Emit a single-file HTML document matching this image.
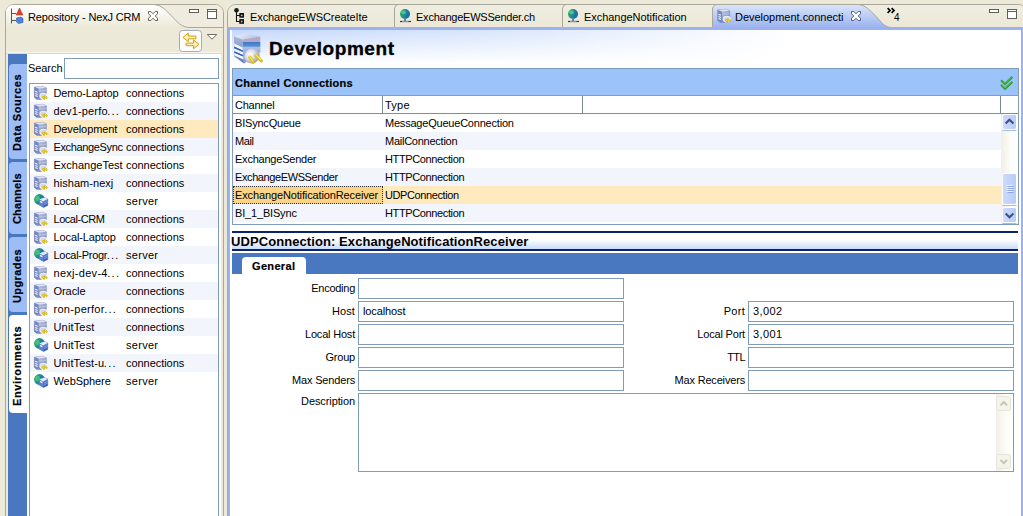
<!DOCTYPE html>
<html><head><meta charset="utf-8"><title>Development.connections</title>
<style>
*{box-sizing:border-box;margin:0;padding:0}
html,body{width:1023px;height:516px;overflow:hidden}
body{position:relative;background:#ece9d8;font-family:"Liberation Sans","DejaVu Sans",sans-serif;font-size:11px;color:#000;letter-spacing:-0.22px;line-height:13px}
.abs{position:absolute}
span,div,svg{position:absolute;white-space:pre}
b{font-weight:bold}
/* left panel */
.lp{left:5px;top:4px;width:219px;height:520px;border:1px solid #aca899;border-radius:9px 9px 0 0;background:#ece9d8}
.lhead{left:6px;top:5px;width:217px;height:23px;border-radius:8px 8px 0 0;background:#efecdf}
.lwhite{left:8px;top:54px;width:213px;height:470px;background:#fff}
.ltopline{left:6px;top:52px;width:216px;height:2px;background:linear-gradient(#f6f4ea 50%,#dcd9c9 50%)}
.vbar{left:8px;top:54px;width:19px;height:470px;background:#4a78c0}
.vtab{left:1px;width:18px;background:#9dbdf6;border-radius:4px 0 0 4px}
.vtab.on{background:#fff}
.vtxt{font-weight:bold;letter-spacing:0.4px;transform-origin:0 0;transform:rotate(-90deg);line-height:13px;height:13px}
.search{left:28px;top:62px}
.sinput{left:64px;top:58px;width:155px;height:21px;border:1px solid #7f9db9;background:#fff}
.list{left:29px;top:83px;width:190px;height:440px;border:1px solid #7f9db9;background:#fff;overflow:hidden}
.row{left:0px;width:188px;height:18px}
.row.alt,.trow.alt{background:#f3f5fc}
.row.sel,.trow.sel{background:#ffe9bf}
.ic{left:4px;top:2px;overflow:visible}
.c1{left:23.5px;top:3px;letter-spacing:-0.3px}
.c2{left:96px;top:3px}
/* right panel */
.rp{left:227px;top:4px;width:800px;height:520px;border:1px solid #aca899;border-radius:9px 9px 0 0;background:#ece9d8}
.rhead{left:228px;top:5px;width:798px;height:22px;border-radius:8px 8px 0 0;background:linear-gradient(#f0eee3,#edeadb 50%,#ece9d8)}
.rblue{left:227px;top:27px;width:796px;height:500px;background:#9ab2ef}
.rwhite{left:230px;top:30px;width:791px;height:490px;background:#fff}
.rgrad{left:232px;top:30px;width:560px;height:38px;background:linear-gradient(to bottom,rgba(255,255,255,0) 0%,rgba(255,255,255,1) 88%),linear-gradient(to right,#c4d8fb 0%,#dbe7fc 50%,#ffffff 100%)}
.tabtxt{top:11px}
.title{left:269px;top:38px;font-size:19px;font-weight:bold;letter-spacing:0.6px;line-height:22px}
.sec{left:232px;top:68px;width:787px;height:157px;border:1px solid #7f9db9;background:#fff}
.sechead{left:233px;top:69px;width:785px;height:26px;background:#9cc4fb}
.sectitle{left:235px;top:77px;font-weight:bold;letter-spacing:0.15px}
.colhead{left:233px;top:95px;width:785px;height:19px;background:#fff;border-bottom:1px solid #828e9e;border-top:1px solid #7f9cc8}
.colsep{top:96px;width:1px;height:18px;background:#7d8897}
.tbody{left:233px;top:114px;width:768px;height:110px;overflow:hidden;background:#fff}
.trow{left:0;width:768px;height:18px}
.t1{left:2px;top:3px;letter-spacing:-0.17px}
.t2{left:152px;top:3px;letter-spacing:-0.25px}
.focbox{left:0;top:0;width:150px;height:18px;border:1px dotted #333;background:#fcd487}
.navy{left:232px;width:786px;height:2px;background:#0a246a}
.h2bar{left:232px;top:233px;width:786px;height:16px;background:linear-gradient(#ffffff,#ffffff 40%,#c9dcfb)}
.h2{left:231px;top:234px;font-size:13px;font-weight:bold;letter-spacing:0.05px;line-height:15px}
.tabbar{left:232px;top:253px;width:786px;height:21px;background:#4a78c0}
.gtab{left:242px;top:257px;width:64px;height:17px;background:#fff;border-radius:4px 4px 0 0}
.gtxt{left:252px;top:260px;font-weight:bold;letter-spacing:0.28px}
.fld{height:21px;border:1px solid #7f9db9;background:#fff}
.lbl{text-align:right;width:120px}
.ftxt{left:4px;top:3px}

.dots{font-style:normal;letter-spacing:1.25px;margin-left:-0.5px;position:static}
.redge{left:227px;top:28px;width:1px;height:500px;background:#a9a8c0}
.sectitle,.gtxt,.vtxt{-webkit-text-stroke:0.2px #000}

</style></head>
<body>
<svg width="0" height="0" style="left:0;top:0">
<defs>
<linearGradient id="gsrv" x1="0" y1="0" x2="0.6" y2="1"><stop offset="0" stop-color="#cfd6ea"/><stop offset="0.5" stop-color="#9dabd2"/><stop offset="1" stop-color="#7686bd"/></linearGradient>
<radialGradient id="gglobe" cx="0.3" cy="0.45" r="0.75"><stop offset="0" stop-color="#58d27a"/><stop offset="0.45" stop-color="#2b9a78"/><stop offset="1" stop-color="#1c63b0"/></radialGradient>
<linearGradient id="gglobe2" x1="0" y1="0.35" x2="1" y2="0.65"><stop offset="0" stop-color="#2fae55"/><stop offset="0.45" stop-color="#1f8f96"/><stop offset="1" stop-color="#1a5fb4"/></linearGradient>
<linearGradient id="gbox" x1="0" y1="0" x2="0.4" y2="1"><stop offset="0" stop-color="#cfdcf6"/><stop offset="0.35" stop-color="#5f8adb"/><stop offset="1" stop-color="#2f55b0"/></linearGradient>
<g id="ic-c">
 <path d="M0.4 1 L8.4 0.3 L12.3 1.7 L12.3 9.2 L7 13.6 L2.6 13.2 L0.4 11.4 Z" fill="url(#gsrv)" stroke="#6272ac" stroke-width="0.5"/>
 <path d="M0.4 1 L8.4 0.3 L12.3 1.7 L4.6 2.6 Z" fill="#dfe4f2"/>
 <path d="M0.4 1 L4.6 2.6 L4.6 13.3 L2.6 13.2 L0.4 11.4 Z" fill="#7787c2"/>
 <path d="M5 4.2 L12 3.4 L12 5.2 L5 6 Z" fill="#bcc4de" opacity="0.8"/>
 <path d="M1.2 5.2 L3.6 6.2 M1.2 7.4 L3.6 8.4 M1.2 9.6 L3.6 10.6" stroke="#f2f4fc" stroke-width="1.1"/>
 <ellipse cx="9.4" cy="10" rx="4" ry="3.3" fill="#f6f6fa" opacity="0.95"/>
 <ellipse cx="9.2" cy="9.8" rx="2.8" ry="2" fill="#d8d9e6"/>
 <path d="M8.6 11 L10 12.6 M10.8 10.2 L12.6 11.8" stroke="#cdb416" stroke-width="2.1" stroke-linecap="round"/>
 <path d="M8.5 10.7 L9.6 12 M10.8 9.9 L12.2 11.2" stroke="#f8ef7c" stroke-width="0.8" stroke-linecap="round"/>
</g>
<g id="ic-s">
 <circle cx="5.5" cy="5.5" r="5.4" fill="url(#gglobe2)"/>
 <ellipse cx="3.6" cy="4.4" rx="2.3" ry="2.6" fill="#5fdc84" opacity="0.55"/>
 <path d="M5.2 5.6 L10.4 3.4 L13.8 5 L13.8 11.4 L9.6 13.6 L5.2 11 Z" fill="url(#gbox)" stroke="#3c5aa6" stroke-width="0.4"/>
 <path d="M5.2 5.6 L10.4 3.4 L13.8 5 L9 7.4 Z" fill="#e4eaf9"/>
 <path d="M5.2 5.6 L9 7.4 L9.6 13.6 L5.2 11 Z" fill="#5b82d4"/>
 <path d="M6 7.4 L8.4 8.6" stroke="#f4f7fe" stroke-width="1.2"/>
 <path d="M9.8 9.2 L13.4 7.4 M9.8 11 L13.4 9.2" stroke="#9fb4e6" stroke-width="0.7"/>
</g>
<g id="ic-globe">
 <circle cx="5" cy="5" r="5" fill="url(#gglobe2)"/>
 <ellipse cx="3.6" cy="3.4" rx="2.2" ry="1.8" fill="#7fe6a0" opacity="0.55"/>
 <path d="M5 10 V12" stroke="#1d3f7a" stroke-width="1.2"/>
 <path d="M0 12.5 H11" stroke="#3a2a5a" stroke-width="1.2"/>
 <path d="M2 12.5 H8.5" stroke="#7c95d8" stroke-width="1.2"/>
</g>
</defs>
</svg>
<div class="lp"></div>
<div class="lhead"></div>
<svg width="230" height="60" style="left:0;top:0" viewBox="0 0 230 60">
 <defs><linearGradient id="gltab" x1="0" y1="0" x2="0" y2="1"><stop offset="0" stop-color="#ffffff"/><stop offset="0.45" stop-color="#f6f5ee"/><stop offset="1" stop-color="#ece9d8"/></linearGradient></defs>
 <!-- active tab fill -->
 <path d="M6 28 L6 13 Q6 5 14 5 L153.5 5 C162 5 166 10.5 171.7 16.1 C177 21.5 181 28 190 28 Z" fill="url(#gltab)"/>
 <path d="M153.5 4.5 C162 5 166 10.5 171.7 16.1 C177 21.5 181 27.5 190 27.5 L223 27.5" fill="none" stroke="#aca899" stroke-width="1"/>
 <!-- repo icon -->
 <path d="M11.5 8.5 V23.5 M11.5 13.5 H16 M11.5 20.5 H16" stroke="#555" stroke-width="1" fill="none"/>
 <path d="M19.5 8 L22.8 15 L16.2 15 Z" fill="#e0452c" stroke="#b02a18" stroke-width="0.6"/>
 <path d="M16.5 18 L21 17 L23 18.5 L23 22.5 L18.5 23.5 L16.5 22 Z" fill="#4f83d8" stroke="#2c5cb0" stroke-width="0.6"/>
 <!-- close X -->
 <path d="M148.50 11.50 L150.75 11.50 L153.00 13.75 L155.25 11.50 L157.50 11.50 L157.50 13.75 L155.25 16.00 L157.50 18.25 L157.50 20.50 L155.25 20.50 L153.00 18.25 L150.75 20.50 L148.50 20.50 L148.50 18.25 L150.75 16.00 L148.50 13.75 Z" fill="#fdfdfb" stroke="#55544c" stroke-width="0.9"/>
 <!-- min / max -->
 <rect x="189.5" y="9.5" width="9" height="3" fill="#fff" stroke="#5f5e54"/>
 <rect x="207.5" y="9.5" width="9" height="9" fill="#fff" stroke="#5f5e54"/>
 <path d="M207.5 11.5 H216.5" stroke="#5f5e54"/>
 <!-- toolbar button -->
 <rect x="179.5" y="30.5" width="22" height="21" rx="3" fill="#fdfdfd" stroke="#a3abb8"/>
 <path d="M183 37.4 L188.3 33 L188.3 36 L195.9 36 L195.9 38.8 L188.3 38.8 L188.3 41.7 Z" fill="#fff0b4" stroke="#cf9d12" stroke-width="1"/>
 <path d="M198.9 44.4 L193.6 40 L193.6 43.1 L186 43.1 L186 45.7 L193.6 45.7 L193.6 48.7 Z" fill="#fff0b4" stroke="#cf9d12" stroke-width="1"/>
 <!-- dropdown -->
 <path d="M207.2 34.5 L216.8 34.5 L212 39.2 Z" fill="#fff" stroke="#6e6d62"/>
</svg>
<span class="tabtxt" style="left:28px;letter-spacing:-0.15px">Repository - NexJ CRM</span>
<div class="ltopline"></div>
<div class="lwhite"></div>
<div class="vbar">
 <div class="vtab" style="top:10px;height:95px"></div>
 <div class="vtab" style="top:108px;height:72px"></div>
 <div class="vtab" style="top:183px;height:75px"></div>
 <div class="vtab on" style="top:261px;height:98px"></div>
 <span class="vtxt" style="left:3px;top:97px;letter-spacing:0.57px">Data Sources</span>
 <span class="vtxt" style="left:3px;top:170px;letter-spacing:0.15px">Channels</span>
 <span class="vtxt" style="left:3px;top:249px">Upgrades</span>
 <span class="vtxt" style="left:3px;top:352px;letter-spacing:0.57px">Environments</span>
</div>
<span class="search" style="letter-spacing:-0.07px">Search</span>
<div class="sinput"></div>
<div class="list">
<div class="row" style="top:0px"><svg class="ic" width="16" height="16" viewBox="0 0 16 16"><use href="#ic-c"/></svg><span class="c1" style="letter-spacing:-0.16px">Demo-Laptop</span><span class="c2" style="letter-spacing:-0.05px">connections</span></div>
<div class="row alt" style="top:18px"><svg class="ic" width="16" height="16" viewBox="0 0 16 16"><use href="#ic-c"/></svg><span class="c1" style="letter-spacing:0.16px">dev1-perfo<i class="dots">...</i></span><span class="c2" style="letter-spacing:-0.05px">connections</span></div>
<div class="row sel" style="top:36px"><svg class="ic" width="16" height="16" viewBox="0 0 16 16"><use href="#ic-c"/></svg><span class="c1" style="letter-spacing:-0.1px">Development</span><span class="c2" style="letter-spacing:-0.05px">connections</span></div>
<div class="row alt" style="top:54px"><svg class="ic" width="16" height="16" viewBox="0 0 16 16"><use href="#ic-c"/></svg><span class="c1" style="letter-spacing:-0.36px">ExchangeSync</span><span class="c2" style="letter-spacing:-0.05px">connections</span></div>
<div class="row" style="top:72px"><svg class="ic" width="16" height="16" viewBox="0 0 16 16"><use href="#ic-c"/></svg><span class="c1" style="letter-spacing:-0.0px">ExchangeTest</span><span class="c2" style="letter-spacing:-0.05px">connections</span></div>
<div class="row alt" style="top:90px"><svg class="ic" width="16" height="16" viewBox="0 0 16 16"><use href="#ic-c"/></svg><span class="c1" style="letter-spacing:0.05px">hisham-nexj</span><span class="c2" style="letter-spacing:-0.05px">connections</span></div>
<div class="row" style="top:108px"><svg class="ic" width="16" height="16" viewBox="0 0 16 16"><use href="#ic-s"/></svg><span class="c1" style="letter-spacing:-0.3px">Local</span><span class="c2" style="letter-spacing:0.29px">server</span></div>
<div class="row alt" style="top:126px"><svg class="ic" width="16" height="16" viewBox="0 0 16 16"><use href="#ic-c"/></svg><span class="c1" style="letter-spacing:-0.46px">Local-CRM</span><span class="c2" style="letter-spacing:-0.05px">connections</span></div>
<div class="row" style="top:144px"><svg class="ic" width="16" height="16" viewBox="0 0 16 16"><use href="#ic-c"/></svg><span class="c1" style="letter-spacing:-0.11px">Local-Laptop</span><span class="c2" style="letter-spacing:-0.05px">connections</span></div>
<div class="row alt" style="top:162px"><svg class="ic" width="16" height="16" viewBox="0 0 16 16"><use href="#ic-s"/></svg><span class="c1" style="letter-spacing:-0.29px">Local-Progr<i class="dots">...</i></span><span class="c2" style="letter-spacing:0.29px">server</span></div>
<div class="row" style="top:180px"><svg class="ic" width="16" height="16" viewBox="0 0 16 16"><use href="#ic-c"/></svg><span class="c1" style="letter-spacing:0.29px">nexj-dev-4<i class="dots">...</i></span><span class="c2" style="letter-spacing:-0.05px">connections</span></div>
<div class="row alt" style="top:198px"><svg class="ic" width="16" height="16" viewBox="0 0 16 16"><use href="#ic-c"/></svg><span class="c1" style="letter-spacing:-0.06px">Oracle</span><span class="c2" style="letter-spacing:-0.05px">connections</span></div>
<div class="row" style="top:216px"><svg class="ic" width="16" height="16" viewBox="0 0 16 16"><use href="#ic-c"/></svg><span class="c1" style="letter-spacing:0.29px">ron-perfor<i class="dots">...</i></span><span class="c2" style="letter-spacing:-0.05px">connections</span></div>
<div class="row alt" style="top:234px"><svg class="ic" width="16" height="16" viewBox="0 0 16 16"><use href="#ic-c"/></svg><span class="c1" style="letter-spacing:0.16px">UnitTest</span><span class="c2" style="letter-spacing:-0.05px">connections</span></div>
<div class="row" style="top:252px"><svg class="ic" width="16" height="16" viewBox="0 0 16 16"><use href="#ic-s"/></svg><span class="c1" style="letter-spacing:0.16px">UnitTest</span><span class="c2" style="letter-spacing:0.29px">server</span></div>
<div class="row alt" style="top:270px"><svg class="ic" width="16" height="16" viewBox="0 0 16 16"><use href="#ic-c"/></svg><span class="c1" style="letter-spacing:0.13px">UnitTest-u<i class="dots">...</i></span><span class="c2" style="letter-spacing:-0.05px">connections</span></div>
<div class="row" style="top:288px"><svg class="ic" width="16" height="16" viewBox="0 0 16 16"><use href="#ic-s"/></svg><span class="c1" style="letter-spacing:-0.07px">WebSphere</span><span class="c2" style="letter-spacing:0.29px">server</span></div>
</div>
<div class="rp"></div>
<div class="rhead"></div>
<div class="rblue"></div>
<div class="rwhite"></div>
<div class="redge"></div>
<div class="rgrad"></div>
<svg width="1023" height="32" style="left:0;top:0" viewBox="0 0 1023 32">
 <defs><linearGradient id="gtab" x1="0" y1="0" x2="0" y2="1"><stop offset="0" stop-color="#dbe6fb"/><stop offset="1" stop-color="#9ab2ef"/></linearGradient></defs>
 <!-- active tab -->
 <path d="M712.5 28 L712.5 9 Q713 4.5 718 4.5 L857.5 4.5 C866 5 870 10.5 875.7 16.1 C881 21.5 884 27.5 892 27.5 L892 28 Z" fill="url(#gtab)" stroke="#aca899" stroke-width="1"/>
 <rect x="712" y="27" width="190" height="2" fill="#9ab2ef"/>
 <!-- separators -->
 <path d="M394.5 27 L394.5 9 Q394.5 5 398 4.5" fill="none" stroke="#aca899"/>
 <path d="M562.5 27 L562.5 9 Q562.5 5 566 4.5" fill="none" stroke="#aca899"/>
 <!-- tab1 icon -->
 <circle cx="236.5" cy="10.3" r="2.3" fill="#1a1a1a"/>
 <path d="M236.5 11 V21.5 H240 M236.5 15.5 H240" stroke="#111" stroke-width="1.1" fill="none"/>
 <rect x="239.3" y="13" width="4.7" height="4.7" fill="#111"/>
 <rect x="239.3" y="19.1" width="4.7" height="4.7" fill="#111"/>
 <circle cx="241.7" cy="15.4" r="0.95" fill="#a8c8b0"/>
 <circle cx="241.7" cy="21.5" r="0.95" fill="#a8b6d8"/>
 <!-- globe icons -->
 <use href="#ic-globe" x="400" y="9"/>
 <use href="#ic-globe" x="568" y="9"/>
 <use href="#ic-c" x="717.3" y="9"/>
 <!-- close X -->
 <path d="M851.50 11.50 L853.75 11.50 L856.00 13.75 L858.25 11.50 L860.50 11.50 L860.50 13.75 L858.25 16.00 L860.50 18.25 L860.50 20.50 L858.25 20.50 L856.00 18.25 L853.75 20.50 L851.50 20.50 L851.50 18.25 L853.75 16.00 L851.50 13.75 Z" fill="#fbfbf8" stroke="#4f5f86" stroke-width="1"/>
 <!-- chevrons -->
 <path d="M887.6 8.2 L890 10.5 L887.6 12.8 M891.6 8.2 L894 10.5 L891.6 12.8" fill="none" stroke="#000" stroke-width="1.7"/>
 <!-- min / max -->
 <rect x="989.5" y="9.5" width="9" height="3" fill="#fff" stroke="#5f5e54"/>
 <rect x="1007.5" y="9.5" width="9" height="9" fill="#fff" stroke="#5f5e54"/>
 <path d="M1007.5 11.5 H1016.5" stroke="#5f5e54"/>
</svg>
<span class="tabtxt" style="left:250px;letter-spacing:-0.09px">ExchangeEWSCreateIte</span>
<span class="tabtxt" style="left:416px;letter-spacing:-0.23px">ExchangeEWSSender.ch</span>
<span class="tabtxt" style="left:584px;letter-spacing:-0.04px">ExchangeNotification</span>
<span class="tabtxt" style="left:735px;letter-spacing:-0.02px">Development.connecti</span>
<span style="left:894px;top:11px;font-size:10px;letter-spacing:0">4</span>
<!-- big icon -->
<svg width="40" height="38" style="left:230px;top:30px" viewBox="0 0 40 38">
 <defs>
  <linearGradient id="gbtop" x1="0" y1="0" x2="1" y2="0.3"><stop offset="0" stop-color="#eef2fa"/><stop offset="1" stop-color="#b8c4de"/></linearGradient>
  <linearGradient id="gbfront" x1="0" y1="0" x2="0" y2="1"><stop offset="0" stop-color="#b7a6c8"/><stop offset="0.2" stop-color="#b7a6c8"/><stop offset="0.22" stop-color="#3f7cc9"/><stop offset="0.36" stop-color="#5a8fd4"/><stop offset="0.4" stop-color="#a9bfe6"/><stop offset="1" stop-color="#7d93cc"/></linearGradient>
  <linearGradient id="gbleft" x1="0" y1="0" x2="0" y2="1"><stop offset="0" stop-color="#aab9dc"/><stop offset="1" stop-color="#5f78ba"/></linearGradient>
  <radialGradient id="gplug" cx="0.45" cy="0.35" r="0.7"><stop offset="0" stop-color="#ffffff"/><stop offset="0.45" stop-color="#dcdde8"/><stop offset="1" stop-color="#8d90ac"/></radialGradient>
 </defs>
 <path d="M4 6.3 L15 3.8 L30.2 6.5 L12.2 9.6 Z" fill="url(#gbtop)"/>
 <path d="M12.2 9.6 L30.2 6.5 L30.5 22 L14 33.5 Z" fill="url(#gbfront)"/>
 <path d="M4 6.3 L12.2 9.6 L14 33.5 L4.4 26.5 Z" fill="url(#gbleft)"/>
 <path d="M4.2 13.6 L12.6 17.4 L12.8 20.4 L4.2 16.6 Z M4.2 18.2 L12.9 22 L13.1 25 L4.3 21.2 Z M4.3 22.8 L13.2 26.6 L13.4 29.6 L4.4 25.6 Z" fill="#f3f6fd"/>
 <path d="M4.2 16.6 L12.8 20.4 L12.9 22 L4.2 18.2 Z M4.3 21.2 L13.1 25 L13.2 26.6 L4.3 22.8 Z" fill="#2f5fba"/>
 <ellipse cx="22" cy="26" rx="7.8" ry="7.2" fill="url(#gplug)" transform="rotate(-35 22 26)"/>
 <path d="M19.8 27.2 L23.4 32.2" stroke="#d9c018" stroke-width="3.2" stroke-linecap="round"/>
 <path d="M25.8 25.6 L31.3 30.8" stroke="#d9c018" stroke-width="3.2" stroke-linecap="round"/>
 <path d="M19.6 26.6 L22.8 31" stroke="#f7ee72" stroke-width="1.1" stroke-linecap="round"/>
 <path d="M25.8 24.9 L30.8 29.6" stroke="#f7ee72" stroke-width="1.1" stroke-linecap="round"/>
</svg>
<span class="title" style="-webkit-text-stroke:0.35px #000;letter-spacing:0.57px">Development</span>
<div class="sec"></div>
<div class="sechead"></div>
<span class="sectitle" style="letter-spacing:0.25px">Channel Connections</span>
<svg width="16" height="16" style="left:999px;top:75px" viewBox="0 0 16 16">
 <path d="M2.1 5.2 L6 9 L13.3 1.9" fill="none" stroke="#2a9a2e" stroke-width="2.3"/><path d="M2.6 5.2 L6 8.4 L12.8 2" fill="none" stroke="#62d665" stroke-width="0.8"/>
 <path d="M2.1 9.8 L6 13.7 L13.3 6.8" fill="none" stroke="#2a9a2e" stroke-width="2.3"/><path d="M2.6 9.8 L6 13.1 L12.8 6.9" fill="none" stroke="#62d665" stroke-width="0.8"/>
</svg>
<div class="colhead"></div>
<div class="colsep" style="left:382px"></div>
<div class="colsep" style="left:582px"></div>
<div class="colsep" style="left:1000px"></div>
<span style="left:235px;top:99px;letter-spacing:-0.23px">Channel</span>
<span style="left:385px;top:99px;letter-spacing:0.25px">Type</span>
<div class="tbody">
<div class="trow" style="top:0px"><span class="t1" style="letter-spacing:-0.2px">BISyncQueue</span><span class="t2" style="letter-spacing:-0.21px">MessageQueueConnection</span></div>
<div class="trow alt" style="top:18px"><span class="t1" style="letter-spacing:-0.42px">Mail</span><span class="t2" style="letter-spacing:-0.25px">MailConnection</span></div>
<div class="trow" style="top:36px"><span class="t1" style="letter-spacing:-0.22px">ExchangeSender</span><span class="t2" style="letter-spacing:-0.37px">HTTPConnection</span></div>
<div class="trow alt" style="top:54px"><span class="t1" style="letter-spacing:-0.4px">ExchangeEWSSender</span><span class="t2" style="letter-spacing:-0.37px">HTTPConnection</span></div>
<div class="trow sel" style="top:72px"><div class="focbox"></div><span class="t1" style="letter-spacing:-0.13px">ExchangeNotificationReceiver</span><span class="t2" style="letter-spacing:-0.4px">UDPConnection</span></div>
<div class="trow alt" style="top:90px"><span class="t1" style="letter-spacing:-0.17px">BI_1_BISync</span><span class="t2" style="letter-spacing:-0.37px">HTTPConnection</span></div>
</div>
<!-- table scrollbar -->
<div style="left:1001px;top:114px;width:17px;height:110px;background:linear-gradient(90deg,#f1efe6,#fdfdfa 60%,#ffffff)"></div>
<svg width="17" height="110" style="left:1001px;top:114px" viewBox="0 0 17 110">
 <defs><linearGradient id="gsb" x1="0" y1="0" x2="1" y2="0"><stop offset="0" stop-color="#cddafd"/><stop offset="1" stop-color="#b9cbf8"/></linearGradient></defs>
 <rect x="1.5" y="0.5" width="14" height="15" rx="2" fill="url(#gsb)" stroke="#fff"/>
 <path d="M1.5 16.5 H15.5" stroke="#a9badf"/>
 <path d="M4.6 9.6 L8.5 5.7 L12.4 9.6" fill="none" stroke="#3f5282" stroke-width="2.1"/>
 <rect x="1.5" y="59.5" width="14" height="31" rx="2" fill="url(#gsb)" stroke="#fff"/>
 <path d="M1.5 91.5 H15.5" stroke="#a9badf"/>
 <path d="M5.5 71.5 H11.5 M5.5 73.5 H11.5 M5.5 75.5 H11.5 M5.5 77.5 H11.5" stroke="#eef3fe" stroke-width="1"/>
 <path d="M6.5 72.5 H12.5 M6.5 74.5 H12.5 M6.5 76.5 H12.5 M6.5 78.5 H12.5" stroke="#8ea4dc" stroke-width="1"/>
 <rect x="1.5" y="93.5" width="14" height="15" rx="2" fill="url(#gsb)" stroke="#fff"/>
 <path d="M1.5 109.5 H15.5" stroke="#a9badf"/>
 <path d="M4.6 99.4 L8.5 103.3 L12.4 99.4" fill="none" stroke="#3f5282" stroke-width="2.1"/>
</svg>
<div class="navy" style="top:231px"></div>
<div class="h2bar"></div>
<span class="h2" style="letter-spacing:0.08px">UDPConnection: ExchangeNotificationReceiver</span>
<div class="navy" style="top:249px"></div>
<div class="tabbar"></div>
<div class="gtab"></div>
<span class="gtxt" style="letter-spacing:0.34px">General</span>
<!-- form -->
<span class="lbl" style="left:235px;top:282px;letter-spacing:-0.27px">Encoding</span>
<span class="lbl" style="left:235px;top:305px;letter-spacing:0.12px">Host</span>
<span class="lbl" style="left:235px;top:328px;letter-spacing:-0.2px">Local Host</span>
<span class="lbl" style="left:235px;top:351px;letter-spacing:-0.22px">Group</span>
<span class="lbl" style="left:235px;top:374px;letter-spacing:-0.17px">Max Senders</span>
<span class="lbl" style="left:235px;top:395px;letter-spacing:-0.1px">Description</span>
<div class="fld" style="left:358px;top:278px;width:266px"></div>
<div class="fld" style="left:358px;top:301px;width:266px"><span class="ftxt" style="letter-spacing:-0.12px">localhost</span></div>
<div class="fld" style="left:358px;top:324px;width:266px"></div>
<div class="fld" style="left:358px;top:347px;width:266px"></div>
<div class="fld" style="left:358px;top:370px;width:266px"></div>
<span class="lbl" style="left:625px;top:305px;letter-spacing:0.3px">Port</span>
<span class="lbl" style="left:625px;top:328px;letter-spacing:-0.19px">Local Port</span>
<span class="lbl" style="left:625px;top:351px;letter-spacing:-0.6px">TTL</span>
<span class="lbl" style="left:625px;top:374px;letter-spacing:-0.17px">Max Receivers</span>
<div class="fld" style="left:748px;top:301px;width:266px"><span class="ftxt" style="letter-spacing:0.42px">3,002</span></div>
<div class="fld" style="left:748px;top:324px;width:266px"><span class="ftxt" style="letter-spacing:0.42px">3,001</span></div>
<div class="fld" style="left:748px;top:347px;width:266px"></div>
<div class="fld" style="left:748px;top:370px;width:266px"></div>
<div class="fld" style="left:358px;top:393px;width:656px;height:79px"></div>
<div style="left:996px;top:394px;width:16px;height:77px;background:linear-gradient(90deg,#f1efe6,#fcfcf8 60%,#fefefd)"></div>
<svg width="16" height="77" style="left:996px;top:394px" viewBox="0 0 16 77">
 <rect x="0.5" y="2.5" width="14" height="14" rx="2" fill="#f4f3ec" stroke="#e6e4d8"/>
 <path d="M4.5 11.3 L7.8 8 L11.1 11.3" fill="none" stroke="#c6c3b6" stroke-width="1.9"/>
 <rect x="0.5" y="60.5" width="14" height="14" rx="2" fill="#f4f3ec" stroke="#e6e4d8"/>
 <path d="M4.5 65.8 L7.8 69.1 L11.1 65.8" fill="none" stroke="#c6c3b6" stroke-width="1.9"/>
</svg>
</body></html>
